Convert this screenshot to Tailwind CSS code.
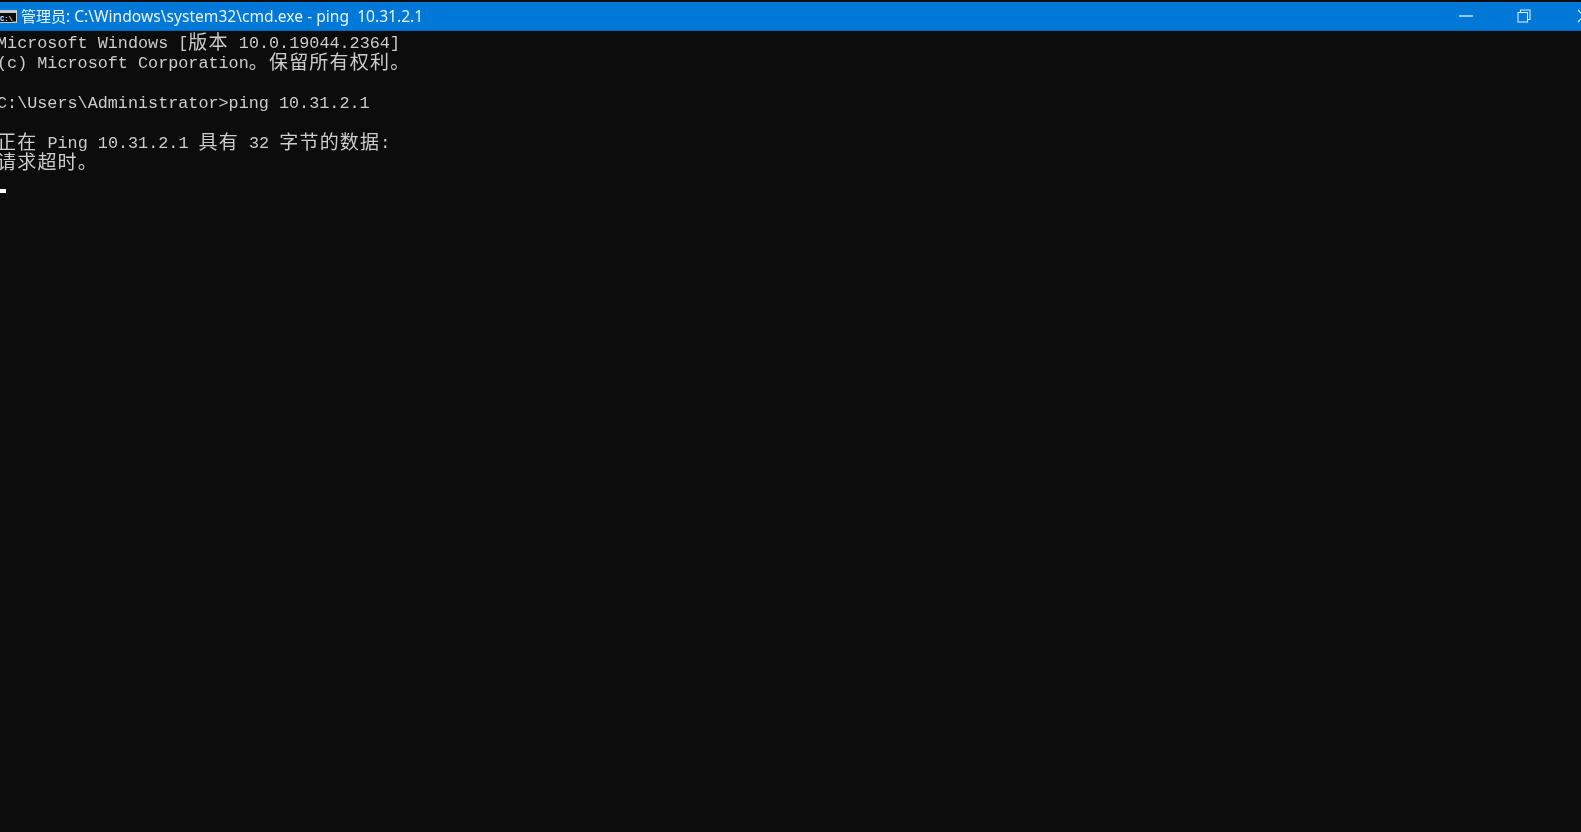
<!DOCTYPE html>
<html lang="zh-CN">
<head>
    <meta charset="UTF-8">
    <title>cmd.exe</title>
    <script src="https://cdn.jsdelivr.net/npm/@tailwindcss/browser@4"></script>
</head>
<body class="h-[832px] w-[1581px] overflow-hidden bg-[#0c0c0c]">
    <!-- title bar -->
    <div class="mt-[2px] h-[29px] flex items-center bg-[#0078d7] border-b border-[#0567b5] text-white overflow-hidden">
        <svg class="w-[17px] h-[13px] shrink-0" viewBox="0 0 17 13">
            <rect width="17" height="13" fill="#c8ccd0"/>
            <rect x="0" y="3" width="16" height="9" fill="#0c0c0c"/>
            <text x="0" y="10.5" font-size="7" font-weight="700" fill="#e8e8e8" font-family="Liberation Mono">C:\_</text>
        </svg>
        <div class="ml-[4px] mt-[1px] flex-1 whitespace-pre text-[15.6px] blur-[0.3px] font-['Noto_Sans','Noto_Sans_CJK_SC',sans-serif] text-[#eaf3fb]"><span class="text-[15px] leading-[0]">管理员</span>: C:\Windows\system32\cmd.exe - ping  10.31.2.1</div>
        <svg class="w-[14px] h-[2px] mr-[44px]" viewBox="0 0 14 2"><rect width="14" height="1.4" y="0.3" fill="#cfe4f6"/></svg>
        <svg class="w-[14px] h-[14px] mr-[46px]" viewBox="0 0 14 14" fill="none" stroke="#dcecf9" stroke-width="1.1">
            <rect x="1" y="3.5" width="9.5" height="9.5"/>
            <path d="M3.5 3.5V1H13V10.5H10.5"/>
        </svg>
        <svg class="w-[14px] h-[14px] mr-[-10px] shrink-0" viewBox="0 0 14 14" fill="none" stroke="#dcecf9" stroke-width="1.2"><path d="M1 1L13 13M13 1L1 13"/></svg>
    </div>

    <!-- console output -->
    <div class="ml-[-3px] mt-[3px] text-[16.8px] leading-[20px] text-[#cccccc] blur-[0.3px] font-['Liberation_Mono','Noto_Sans_CJK_SC',monospace]">
        <div class="h-[20px] whitespace-pre">Microsoft Windows [<span class="text-[19px] leading-[0] align-[-1px] tracking-[1.2px] font-['Noto_Sans_CJK_SC',sans-serif]">版本</span> 10.0.19044.2364]</div>
        <div class="h-[20px] whitespace-pre">(c) Microsoft Corporation<span class="text-[19px] leading-[0] align-[-1px] tracking-[1.2px] font-['Noto_Sans_CJK_SC',sans-serif]">。保留所有权利。</span></div>
        <div class="h-[20px]"></div>
        <div class="h-[20px] whitespace-pre">C:\Users\Administrator&gt;ping 10.31.2.1</div>
        <div class="h-[20px]"></div>
        <div class="h-[20px] whitespace-pre"><span class="text-[19px] leading-[0] align-[-1px] tracking-[1.2px] font-['Noto_Sans_CJK_SC',sans-serif]">正在</span> Ping 10.31.2.1 <span class="text-[19px] leading-[0] align-[-1px] tracking-[1.2px] font-['Noto_Sans_CJK_SC',sans-serif]">具有</span> 32 <span class="text-[19px] leading-[0] align-[-1px] tracking-[1.2px] font-['Noto_Sans_CJK_SC',sans-serif]">字节的数据</span>:</div>
        <div class="h-[20px] whitespace-pre"><span class="text-[19px] leading-[0] align-[-1px] tracking-[1.2px] font-['Noto_Sans_CJK_SC',sans-serif]">请求超时。</span></div>
        <div class="ml-[3px] mt-[15px] w-[6px] h-[4px] bg-white"></div>
    </div>
</body>
</html>
